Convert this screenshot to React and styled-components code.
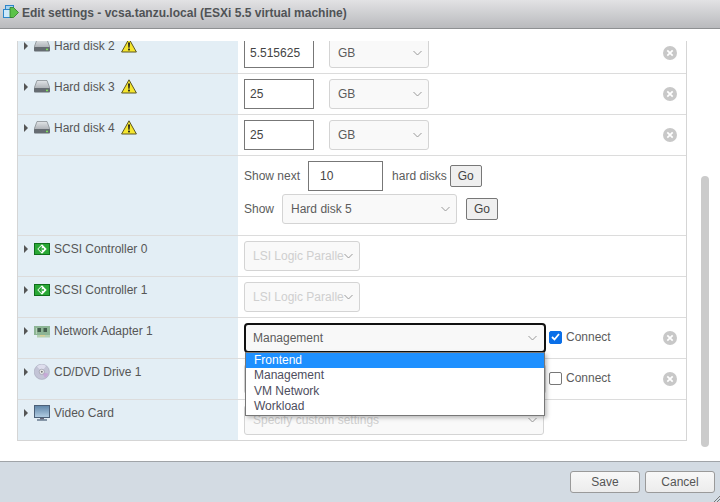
import React from "react";
import styled, { createGlobalStyle } from "styled-components";

const Global = createGlobalStyle`
  html, body { margin: 0; padding: 0; background: #fff; }
  body { font-family: "Liberation Sans", Arial, sans-serif; font-size: 12px; color: #565656; }
  * { box-sizing: border-box; }
`;
const Page = styled.div`width:720px;height:502px;display:flex;flex-direction:column;overflow:hidden;background:#fff;`;
const Header = styled.header`
  height:29px;flex:none;display:flex;align-items:center;gap:3px;padding:0 0 2px 3px;
  background:linear-gradient(#e2e2e4,#b9babd);border-bottom:1px solid #8e9092;
`;
const Title = styled.h1`margin:0;font:bold 12px "Liberation Sans",Arial,sans-serif;color:#505356;`;
const Body = styled.main`flex:1;min-height:0;display:flex;padding:12px 0 0 17px;background:#fff;`;
const Viewport = styled.div`width:670px;height:400px;overflow:hidden;flex:none;border:1px solid #d5d5d5;border-top:0;`;
const Rows = styled.div`margin-top:-8px;`;
const Row = styled.div`
  display:grid;grid-template-columns:220px 1fr;height:${p=>p.$h||41}px;
  border-bottom:${p=>p.$last?0:"1px solid #dcdcdc"};
`;
const Side = styled.div`background:#e3eef5;display:flex;align-items:flex-start;padding:5px 0 0 6px;height:100%;`;
const Arrow = styled.span`
  width:0;height:0;margin:4px 6px 0 0;flex:none;
  border-left:4px solid #555;border-top:4px solid transparent;border-bottom:4px solid transparent;
`;
const IconBox = styled.span`width:16px;height:16px;flex:none;margin-right:4px;display:flex;`;
const Label = styled.span`line-height:16px;white-space:nowrap;`;
const Warn = styled.span`margin-left:6px;display:flex;`;
const Main = styled.div`display:flex;align-items:flex-start;padding:5px 9px 0 6px;height:100%;position:relative;`;
const NumInput = styled.input`
  width:${p=>p.$w||70}px;height:30px;border:1px solid #777;background:#fff;color:#444;
  font:12px "Liberation Sans",Arial,sans-serif;padding:0 ${p=>p.$pad||5}px;outline:0;margin:0 0 0 ${p=>p.$ml||0}px;flex:none;
`;
const Select = styled.div`
  width:${p=>p.$w}px;height:30px;flex:none;display:flex;align-items:center;justify-content:space-between;
  padding:0 6px 0 8px;border:1px solid #d4d4d4;border-radius:3px;background:#f9f9f9;white-space:nowrap;overflow:hidden;
  color:${p=>p.$off?"#cfcfcf":"#5c5c5c"};margin-left:${p=>p.$ml||0}px;
`;
const OpenSelect = styled(Select)`border:2px solid #111;border-radius:4px;padding:0 7px;background:#f8f8f8;`;
const SelText = styled.span`overflow:hidden;flex:1;min-width:0;`;
const Wrap = styled.div`position:relative;flex:none;`;
const Menu = styled.ul`
  position:absolute;z-index:5;left:1px;top:29px;width:300px;margin:0;padding:0 0 1px;list-style:none;background:#fff;
  border:1px solid #777;box-shadow:2px 2px 4px rgba(0,0,0,.25);
`;
const Opt = styled.li`
  height:15.25px;line-height:15px;padding-left:8px;color:${p=>p.$on?"#fff":"#4e4e5e"};
  background:${p=>p.$on?"#1e90ff":"#fff"};
`;
const Spacer = styled.span`flex:1;`;
const Remove = styled.span`width:14px;height:14px;margin-top:8px;display:flex;flex:none;`;
const Connect = styled.label`display:flex;align-items:center;gap:4px;height:16px;margin:6px 0 0 3px;color:#5c5c5c;`;
const Check = styled.span`
  width:13px;height:13px;border-radius:2px;display:flex;align-items:center;justify-content:center;
  background:${p=>p.$on?"#0a6fe8":"#fff"};border:1px solid ${p=>p.$on?"#0a6fe8":"#777"};
`;
const ShowCell = styled.div`display:flex;flex-direction:column;padding:5px 0 0 6px;`;
const ShowLine = styled.div`display:flex;align-items:center;color:#5c5c5c;height:30px;margin-bottom:3px;`;
const Gap = styled.span`margin-left:${p=>p.$ml}px;`;
const GoBtn = styled.button`
  width:32px;height:22px;padding:0;border:1px solid #777;border-radius:2px;background:#efefef;color:#444;
  font:12px "Liberation Sans",Arial,sans-serif;margin-left:${p=>p.$ml||0}px;
`;
const Scroll = styled.div`width:8px;height:271px;margin:135px 0 0 14px;background:#cbcbcb;border-radius:4px;flex:none;`;
const Footer = styled.footer`
  height:41px;flex:none;display:flex;justify-content:flex-end;gap:5px;padding:9px 5px 0 0;position:relative;
  background:#d3dbe3;border-top:1px solid #a0a4a8;
`;
const FootBtn = styled.button`
  width:70px;height:22px;padding:0;border:1px solid #9a9a9a;border-radius:3px;background:linear-gradient(#f8f8f8,#ececec);color:#555;
  font:12px "Liberation Sans",Arial,sans-serif;
`;
const Grip = styled.svg`position:absolute;right:0;bottom:0;`;

const Chevron = () => (
  <svg width="9" height="6" viewBox="0 0 9 6" style={{ flex: "none" }}>
    <path d="M.5 1l4 4 4-4" fill="none" stroke="#999" strokeWidth="1" />
  </svg>
);
const WarnIcon = () => (
  <svg width="16" height="15" viewBox="0 0 16 15">
    <path d="M8 .8L15.4 14H.6z" fill="#f5e62e" stroke="#5c5620" strokeWidth="1" strokeLinejoin="round" />
    <path d="M7 4.5h2l-.4 5.2H7.4z" fill="#1c1c1c" />
    <rect x="7.1" y="10.6" width="1.8" height="1.8" fill="#1c1c1c" />
  </svg>
);
const DiskIcon = () => (
  <svg width="16" height="16" viewBox="0 0 16 16">
    <defs>
      <linearGradient id="dt" x1="0" y1="0" x2="0" y2="1"><stop offset="0" stopColor="#e2e5e8" /><stop offset="1" stopColor="#a9adb2" /></linearGradient>
    </defs>
    <path d="M3 1.5h10L15.8 9v1H.2V9z" fill="url(#dt)" stroke="#7d8287" strokeWidth=".7" />
    <rect x="0" y="9" width="16" height="4.6" rx="1" fill="#666c72" />
    <rect x="12" y="10.7" width="2" height="1.5" fill="#7fe05a" />
  </svg>
);
const ScsiIcon = () => (
  <svg width="16" height="16" viewBox="0 0 16 16">
    <rect x=".5" y="2.5" width="15" height="11" fill="#2aa836" stroke="#0e6e1a" />
    <path d="M8 3.3L12.7 8 8 12.7 3.3 8z" fill="#fff" />
    <path d="M7.8 5.5L5.3 8l2.5 2.5M5.5 8h4.5" fill="none" stroke="#2aa836" strokeWidth="1.4" />
  </svg>
);
const NicIcon = () => (
  <svg width="16" height="16" viewBox="0 0 16 16">
    <rect x="0" y="3" width="16" height="9" fill="#8db595" />
    <rect x="2" y="5" width="1" height="6" fill="#b7d4bb" />
    <rect x="3.5" y="5" width="3.5" height="4" fill="#445f4e" />
    <rect x="9.5" y="5" width="3.5" height="4" fill="#445f4e" />
    <rect x="3" y="12" width="13" height="2.5" fill="#b3d0b2" />
    <rect x="6" y="12" width="5" height="1.5" fill="#d8cf95" />
  </svg>
);
const CdIcon = () => (
  <svg width="16" height="16" viewBox="0 0 16 16">
    <circle cx="7.8" cy="7.8" r="7.6" fill="#c3c4d6" stroke="#a5a6b8" strokeWidth=".6" />
    <path d="M7.8 7.8L3 2.5A7 7 0 0 1 12 2z" fill="#dedeed" />
    <path d="M7.8 7.8l6.5 2A7 7 0 0 1 11 14z" fill="#c7a8d6" />
    <circle cx="7.8" cy="7.8" r="2.6" fill="#eee" stroke="#8a8b9a" strokeWidth=".6" />
    <circle cx="7.8" cy="7.8" r="1" fill="#777" />
  </svg>
);
const MonitorIcon = () => (
  <svg width="16" height="16" viewBox="0 0 16 16">
    <defs>
      <linearGradient id="ms" x1="0" y1="0" x2="0" y2="1"><stop offset="0" stopColor="#5d84a8" /><stop offset="1" stopColor="#b4cfe4" /></linearGradient>
    </defs>
    <rect x=".5" y=".5" width="15" height="12" fill="url(#ms)" stroke="#4b6078" />
    <rect x="6" y="13" width="4" height="1.3" fill="#667" />
    <rect x="3" y="14.4" width="10" height="1.2" fill="#4b6078" />
  </svg>
);
const RemoveIcon = () => (
  <svg width="14" height="14" viewBox="0 0 14 14">
    <circle cx="7" cy="7" r="7" fill="#c8c8c8" />
    <path d="M4.3 4.3l5.4 5.4M9.7 4.3L4.3 9.7" stroke="#fff" strokeWidth="1.7" />
  </svg>
);
const AppIcon = () => (
  <svg width="16" height="16" viewBox="0 0 16 16">
    <rect x="2.5" y=".5" width="8" height="7" fill="#a9d4f2" stroke="#2d86c9" />
    <rect x=".5" y="4.5" width="8" height="8" fill="#cfe9fa" stroke="#2d86c9" />
    <path d="M7 2.5h3.5L15.5 7.5l-5 5H7z" fill="#5cc24a" stroke="#2f7f26" strokeWidth=".8" />
  </svg>
);

const Device = ({ icon, name, warn }) => (
  <Side>
    <Arrow />
    <IconBox>{icon}</IconBox>
    <Label>{name}</Label>
    {warn && <Warn><WarnIcon /></Warn>}
  </Side>
);
const Drop = ({ w, text, off, ml }) => (
  <Select $w={w} $off={off} $ml={ml}>
    <SelText>{text}</SelText>
    <Chevron />
  </Select>
);

const disks = [["Hard disk 2", "5.515625"], ["Hard disk 3", "25"], ["Hard disk 4", "25"]];

export default function App() {
  return (
    <Page>
      <Global />
      <Header>
        <AppIcon />
        <Title>Edit settings - vcsa.tanzu.local (ESXi 5.5 virtual machine)</Title>
      </Header>
      <Body>
        <Viewport>
          <Rows>
            {disks.map(([n, v]) => (
              <Row key={n}>
                <Device icon={<DiskIcon />} name={n} warn />
                <Main>
                  <NumInput readOnly value={v} />
                  <Drop w={100} text="GB" ml={15} />
                  <Spacer />
                  <Remove><RemoveIcon /></Remove>
                </Main>
              </Row>
            ))}
            <Row $h={80}>
              <Side />
              <ShowCell>
                <ShowLine>
                  <span>Show next</span>
                  <NumInput readOnly value="10" $w={75} $pad={11} $ml={8} />
                  <Gap $ml={9}>hard disks</Gap>
                  <GoBtn $ml={3}>Go</GoBtn>
                </ShowLine>
                <ShowLine>
                  <span>Show</span>
                  <Drop w={175} text="Hard disk 5" ml={8} />
                  <GoBtn $ml={9}>Go</GoBtn>
                </ShowLine>
              </ShowCell>
            </Row>
            {["SCSI Controller 0", "SCSI Controller 1"].map((n) => (
              <Row key={n}>
                <Device icon={<ScsiIcon />} name={n} />
                <Main>
                  <Drop w={116} text="LSI Logic Parallel" off />
                </Main>
              </Row>
            ))}
            <Row>
              <Device icon={<NicIcon />} name="Network Adapter 1" />
              <Main>
                <Wrap>
                  <OpenSelect $w={302}>
                    <SelText>Management</SelText>
                    <Chevron />
                  </OpenSelect>
                  <Menu>
                    <Opt $on>Frontend</Opt>
                    <Opt>Management</Opt>
                    <Opt>VM Network</Opt>
                    <Opt>Workload</Opt>
                  </Menu>
                </Wrap>
                <Connect><Check $on><svg width="9" height="8" viewBox="0 0 9 8"><path d="M1 4l2.5 2.5L8 1" fill="none" stroke="#fff" strokeWidth="1.8" /></svg></Check>Connect</Connect>
                <Spacer />
                <Remove><RemoveIcon /></Remove>
              </Main>
            </Row>
            <Row>
              <Device icon={<CdIcon />} name="CD/DVD Drive 1" />
              <Main>
                <Wrap>
                  <Select $w={302}><SelText /></Select>
                </Wrap>
                <Connect><Check />Connect</Connect>
                <Spacer />
                <Remove><RemoveIcon /></Remove>
              </Main>
            </Row>
            <Row $last>
              <Device icon={<MonitorIcon />} name="Video Card" />
              <Main>
                <Drop w={300} text="Specify custom settings" off />
              </Main>
            </Row>
          </Rows>
        </Viewport>
        <Scroll />
      </Body>
      <Footer>
        <FootBtn>Save</FootBtn>
        <FootBtn>Cancel</FootBtn>
        <Grip width="6" height="6" viewBox="0 0 6 6"><path d="M0 6l6-6M3 6l3-3" stroke="#777" strokeWidth="1" /></Grip>
      </Footer>
    </Page>
  );
}
